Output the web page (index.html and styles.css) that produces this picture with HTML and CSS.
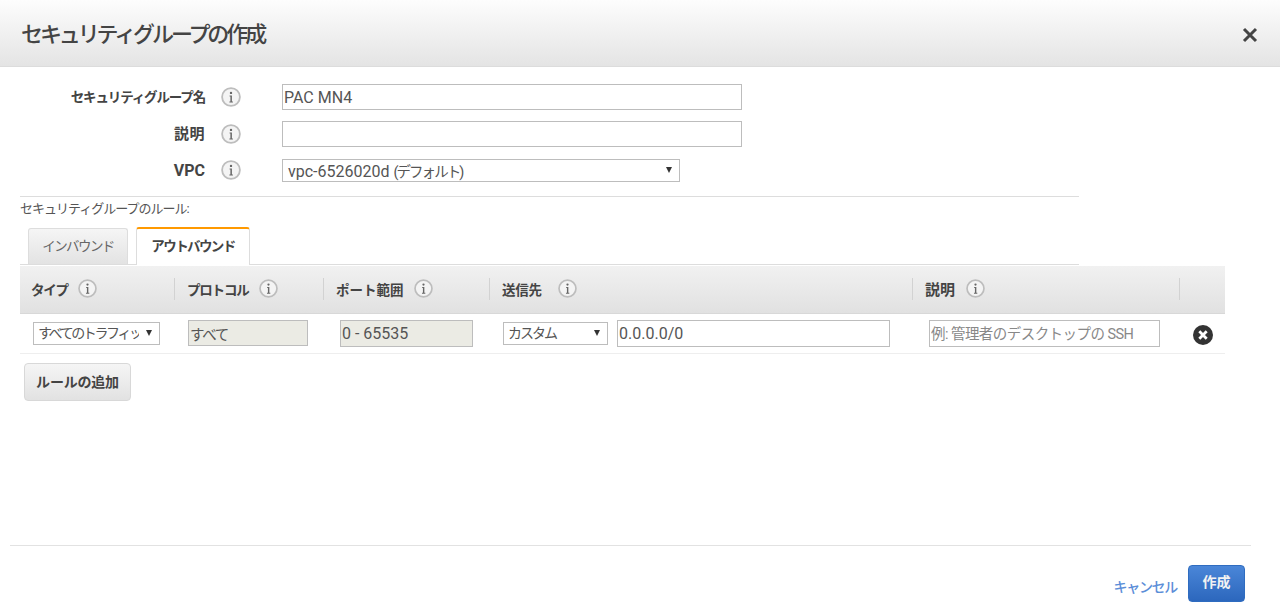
FILE: index.html
```html
<!DOCTYPE html>
<html lang="ja">
<head>
<meta charset="utf-8">
<title>セキュリティグループの作成</title>
<link rel="stylesheet" href="styles.css">
</head>
<body>
<svg class="defs" width="0" height="0" aria-hidden="true">
  <symbol id="info" viewBox="0 0 20 20">
    <circle cx="10" cy="10" r="8.9" fill="#f4f4f4" stroke="#bdbdbd" stroke-width="1.8"/>
    <circle cx="10" cy="5.9" r="1.2" fill="#666"/>
    <path d="M8.6 8.4h2.3v6h1v1H8.4v-1h1v-5h-.8z" fill="#666"/>
  </symbol>
</svg>
<header class="head">
  <h1 class="title">セキュリティグループの作成</h1>
  <svg class="close" width="16" height="16" viewBox="0 0 16 16"><path d="M2 2l12 12M14 2L2 14" stroke="#444" stroke-width="3" fill="none"/></svg>
</header>
<main class="body">
  <div class="form-row">
    <label class="form-label">セキュリティグループ名</label>
    <svg class="info form-info"><use href="#info"/></svg>
    <input class="text form-input" type="text" value="PAC MN4">
  </div>
  <div class="form-row">
    <label class="form-label form-kanji">説明</label>
    <svg class="info form-info"><use href="#info"/></svg>
    <input class="text form-input" type="text" value="">
  </div>
  <div class="form-row">
    <label class="form-label latin">VPC</label>
    <svg class="info form-info"><use href="#info"/></svg>
    <span class="select-wrap vpc"><span class="select-box" role="combobox">vpc-6526020d <span class="select-kana">(デフォルト)</span></span></span>
  </div>

  <section class="rules">
    <div class="rules-label">セキュリティグループのルール:</div>
    <nav class="tabs">
      <span class="tab">インバウンド</span>
      <span class="tab tab-active">アウトバウンド</span>
    </nav>
    <div class="grid grid-head">
      <div class="th th-first"><span>タイプ</span><svg class="info"><use href="#info"/></svg></div>
      <div class="th"><span>プロトコル</span><svg class="info"><use href="#info"/></svg></div>
      <div class="th th-port"><span>ポート範囲</span><svg class="info"><use href="#info"/></svg></div>
      <div class="th th-dest"><span>送信先</span><svg class="info"><use href="#info"/></svg></div>
      <div class="th th-desc"><span>説明</span><svg class="info"><use href="#info"/></svg></div>
      <div class="th th-last"></div>
    </div>
    <div class="grid grid-row">
      <div class="td td-type"><span class="select-wrap w-type"><select class="select"><option>すべてのトラフィック</option></select></span></div>
      <div class="td td-proto"><input class="text ro w-proto" type="text" value="すべて" readonly></div>
      <div class="td td-port"><input class="text ro w-port" type="text" value="0 - 65535" readonly></div>
      <div class="td td-dest">
        <span class="select-wrap w-dest"><select class="select"><option>カスタム</option></select></span>
        <input class="text w-cidr" type="text" value="0.0.0.0/0">
      </div>
      <div class="td td-desc"><input class="text w-desc" type="text" placeholder="例: 管理者のデスクトップの SSH"></div>
      <div class="td td-del">
        <svg class="del" width="20" height="20" viewBox="0 0 20 20"><circle cx="10" cy="10" r="10" fill="#333"/><path d="M6.3 6.3l7.4 7.4M13.7 6.3l-7.4 7.4" stroke="#fff" stroke-width="2.8" fill="none"/></svg>
      </div>
    </div>
    <button class="btn add" type="button">ルールの追加</button>
  </section>
</main>
<footer class="foot">
  <a class="cancel">キャンセル</a>
  <button class="btn-primary" type="button">作成</button>
</footer>
</body>
</html>
```

FILE: styles.css
```css
* { box-sizing: border-box; }
html, body { margin: 0; padding: 0; height: 605px; overflow: hidden; background: #fff; }
body { font-family: Roboto, "Noto Sans CJK JP", sans-serif; font-size: 14px; color: #444; }
.defs { display: block; height: 0; }

.head {
  height: 67px;
  display: flex;
  align-items: center;
  justify-content: space-between;
  padding: 0 22px 2px 21px;
  background: linear-gradient(#fdfdfd, #e4e4e4);
  border-bottom: 1px solid #dcdcdc;
}
.title { margin: 0; font-size: 22px; font-weight: 500; letter-spacing: -3.1px; color: #444; }
.close { display: block; margin-top: 5px; }

.body { padding-top: 17px; }
.form-row { display: flex; align-items: center; margin-bottom: 11px; }
.form-label { width: 205px; padding-bottom: 3px; text-align: right; font-weight: 700; font-size: 13.5px; letter-spacing: -1.15px; color: #444; }
.form-label.form-kanji { font-size: 15px; letter-spacing: 0.5px; padding-bottom: 3px; }
.form-label.latin { letter-spacing: 0; font-size: 16px; padding-bottom: 0; }
.info { display: block; width: 20px; height: 20px; flex: none; }
.form-info { margin: 0 41px 0 16px; }

.text {
  height: 26px;
  border: 1px solid #bdbdbd;
  background: #fff;
  padding: 0 1px;
  font: 16px Roboto, "Noto Sans CJK JP", sans-serif;
  color: #555;
  outline: none;
  border-radius: 0;
}
.text::placeholder { color: #888; opacity: 1; font-size: 14.5px; letter-spacing: -0.55px; }
.form-input { width: 460px; }

.select-wrap { display: block; position: relative; height: 23px; flex: none; }
.select-wrap::after {
  content: "";
  position: absolute;
  top: 8px;
  right: 8px;
  border: 3.5px solid transparent;
  border-top: 6px solid #333;
  border-bottom: 0;
}
.select {
  display: block;
  width: 100%;
  height: 100%;
  appearance: none;
  border: 1px solid #bdbdbd;
  border-radius: 0;
  background: #fff;
  padding: 0 20px 0 4px;
  font: 14px Roboto, "Noto Sans CJK JP", sans-serif;
  letter-spacing: -2.4px;
  color: #555;
  outline: none;
}
.w-dest .select { letter-spacing: -2px; }
.select-box {
  display: block;
  height: 100%;
  border: 1px solid #bdbdbd;
  background: #fff;
  padding-left: 5px;
  font-size: 16px;
  line-height: 23px;
  color: #555;
  white-space: nowrap;
}
.select-kana { font-size: 14.5px; letter-spacing: -1.95px; }
.vpc { width: 398px; margin-top: 1px; }

.rules { margin: 14px 0 0 20px; }
.rules-label {
  width: 1059px;
  height: 31px;
  padding-top: 1px;
  border-top: 1px solid #ddd;
  font-size: 13px;
  letter-spacing: -1px;
  color: #555;
}
.tabs { display: flex; align-items: flex-end; width: 1059px; height: 38px; padding-left: 8px; gap: 8px; border-bottom: 1px solid #ddd; }
.tab {
  display: flex;
  align-items: center;
  justify-content: center;
  width: 100px;
  height: 36px;
  padding-bottom: 4px;
  border: 1px solid #ddd;
  border-bottom: 0;
  border-radius: 3px 3px 0 0;
  background: linear-gradient(#f5f5f5, #e3e3e3);
  font-size: 13.5px;
  letter-spacing: -1.6px;
  color: #666;
}
.tab-active {
  width: 114px;
  height: 38px;
  margin-bottom: -1px;
  border-top: 2px solid #f90;
  background: #fff;
  font-weight: 700;
  color: #444;
}

.grid { display: grid; grid-template-columns: 154px 149px 166px 423px 267px 46px; width: 1205px; }
.grid-head { height: 48px; margin-top: 1px; background: linear-gradient(#f1f1f1, #e1e1e1); border-bottom: 1px solid #d8d8d8; }
.th {
  display: flex;
  align-items: center;
  gap: 10px;
  padding: 0 0 2px 13px;
  font-weight: 700;
  font-size: 13.5px;
  letter-spacing: -1.2px;
  color: #444;
  position: relative;
}
.th-first { padding-left: 11px; }
.th-port { letter-spacing: 0; }
.th-dest { letter-spacing: -0.2px; gap: 16px; }
.th-desc { font-size: 15px; letter-spacing: 0; gap: 11px; }
.th .info { width: 19px; height: 19px; }
.th::after {
  content: "";
  position: absolute;
  top: 12px;
  bottom: 13px;
  right: -1px;
  border-right: 1px solid #d2d2d2;
}
.th-last::after { display: none; }
.grid-row { height: 40px; border-bottom: 1px solid #eee; }
.td { display: flex; align-items: center; padding-bottom: 1px; }
.td-type { padding-left: 13px; }
.td-proto { padding-left: 14px; }
.td-port { padding-left: 17px; }
.td-dest { padding-left: 14px; gap: 9px; }
.td-desc { padding-left: 17px; }
.td-del { padding: 2px 0 0 14px; }
.w-type { width: 127px; }
.w-dest { width: 105px; }
.ro { background: #ebebe4; color: #555; }
.ro.w-proto { font-size: 14.5px; letter-spacing: -1.3px; }
.w-proto { width: 120px; }
.w-port { width: 133px; height: 27px; }
.w-cidr { width: 273px; height: 27px; }
.w-desc { width: 231px; height: 27px; }
.del { display: block; }

.btn {
  display: block;
  font: 700 14px Roboto, "Noto Sans CJK JP", sans-serif;
  letter-spacing: -0.2px;
  color: #444;
  width: 107px;
  height: 38px;
  margin: 9px 0 0 4px;
  padding: 0 0 2px;
  border: 1px solid #d8d8d8;
  border-radius: 4px;
  background: linear-gradient(#f5f5f5, #e2e2e2);
}

.foot {
  margin: 144px 0 0 10px;
  width: 1241px;
  border-top: 1px solid #e2e2e2;
  padding: 19px 6px 0 0;
  display: flex;
  align-items: center;
  justify-content: flex-end;
  gap: 11px;
}
.cancel { font-size: 14px; font-weight: 500; letter-spacing: -1.3px; color: #5b8ed8; padding-top: 5px; }
.btn-primary {
  width: 57px;
  height: 37px;
  padding: 0 0 6px;
  border: 1px solid #2f6cc0;
  border-radius: 4px;
  background: linear-gradient(#4a86d8, #2c67bd);
  color: #f2f2f2;
  font: 700 14px Roboto, "Noto Sans CJK JP", sans-serif;
}
```
